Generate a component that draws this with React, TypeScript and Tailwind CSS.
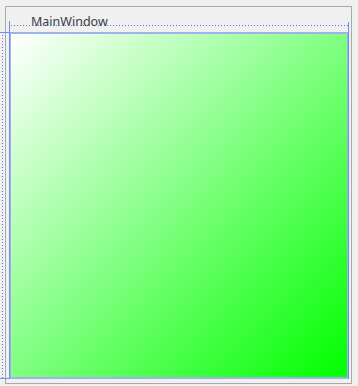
export default function App() {
  return (
    <div
      className="relative w-[358px] h-[386px] bg-[#f0f0f0] overflow-hidden pl-[5px] pt-[6px]"
      style={{ fontFamily: '"Noto Sans", "Liberation Sans", sans-serif' }}
    >
      {/* window frame */}
      <div className="w-[347px] h-[378px] border border-[#a9a9a9] flex flex-col pl-[3px] pt-[8px]">
        <div className="pl-[22px] text-[12.5px] leading-[14px] text-[#3c3c3c]">MainWindow</div>
        <div className="mt-[3px] w-[340px] h-[347px] border-2 border-[#a0b2ee]">
          <div className="w-full h-full bg-[linear-gradient(to_bottom_right,#ffffff,#00ff00)]" />
        </div>
      </div>

      {/* designer selection guides */}
      <div className="absolute left-[11px] top-[25px] w-[339px] h-px bg-[repeating-linear-gradient(to_right,#4f7ae0_0px,#4f7ae0_1px,transparent_1px,transparent_3px)]" />
      <div className="absolute left-[2px] top-[35px] w-px h-[343px] bg-[repeating-linear-gradient(to_bottom,#4f7ae0_0px,#4f7ae0_1px,transparent_1px,transparent_3px)]" />
      <div className="absolute left-[9px] top-[21px] w-px h-[358px] bg-[#6f8fe8]" />
      <div className="absolute left-[348px] top-[22px] w-px h-[357px] bg-[#6f8fe8]" />
      <div className="absolute left-0 top-[32px] w-[10px] h-px bg-[#6f8fe8]" />
      <div className="absolute left-0 top-[378px] w-[10px] h-px bg-[#6f8fe8]" />
    </div>
  );
}
